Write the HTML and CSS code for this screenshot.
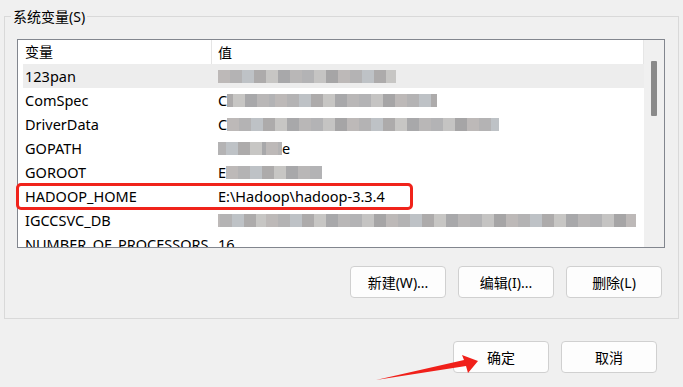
FILE: index.html
```html
<!DOCTYPE html>
<html>
  <head>
    <meta charset="UTF-8" />
    <title>环境变量</title>
    <link rel="stylesheet" href="styles.css">
  </head>
  <body>
    <div class="group">
      <span class="legend">系统变量(S)</span>
      <div class="list">
        <div class="view">
          <div class="head">
            <div class="col-name">变量</div>
            <div class="col-value">值</div>
          </div>
          <div class="row selected">
            <div class="name">123pan</div>
            <div class="value"><span class="blur" style="width:178px"></span></div>
          </div>
          <div class="row">
            <div class="name">ComSpec</div>
            <div class="value">C<span class="blur alt" style="width:210px"></span></div>
          </div>
          <div class="row">
            <div class="name">DriverData</div>
            <div class="value">C<span class="blur" style="width:272px"></span></div>
          </div>
          <div class="row">
            <div class="name">GOPATH</div>
            <div class="value"><span class="blur alt" style="width:64px"></span>e</div>
          </div>
          <div class="row">
            <div class="name">GOROOT</div>
            <div class="value">E<span class="blur" style="width:96px"></span></div>
          </div>
          <div class="row">
            <div class="name">HADOOP_HOME</div>
            <div class="value">E:\Hadoop\hadoop-3.3.4</div>
          </div>
          <div class="row">
            <div class="name">IGCCSVC_DB</div>
            <div class="value"><span class="blur alt" style="width:418px"></span></div>
          </div>
          <div class="row">
            <div class="name">NUMBER_OF_PROCESSORS</div>
            <div class="value">16</div>
          </div>
        </div>
        <div class="scrollbar"><div class="thumb"></div></div>
        <div class="mark"></div>
      </div>
      <div class="actions">
        <button class="btn">新建(W)...</button>
        <button class="btn">编辑(I)...</button>
        <button class="btn">删除(L)</button>
      </div>
    </div>

    <div class="footer">
      <button class="btn">确定</button>
      <button class="btn">取消</button>
    </div>

    <svg class="arrow" width="683" height="387" viewBox="0 0 683 387">
      <polygon points="376,380 464,360 462,355 478,361 468,373 466,366" fill="#f0201a" />
    </svg>
  </body>
</html>
```

FILE: styles.css
```css
body {
  margin: 0;
  width: 683px;
  height: 387px;
  overflow: hidden;
  position: relative;
  background-color: #f0f0f0;
  font-family: "Noto Sans", "Noto Sans CJK SC", sans-serif;
  font-size: 14px;
  color: #000;
}

.group {
  position: relative;
  box-sizing: border-box;
  width: 675px;
  height: 303px;
  margin: 16px 0 0 4px;
  padding: 22px 0 0 12px;
  border: 1px solid #d9d9d9;
}

.legend {
  position: absolute;
  top: -10px;
  left: 6px;
  padding: 0 2px;
  line-height: 20px;
  background-color: #f0f0f0;
}

.list {
  position: relative;
  display: flex;
  box-sizing: border-box;
  width: 648px;
  height: 209px;
  border: 1px solid #82868e;
  background-color: #fff;
  font-size: 14.5px;
}

.view {
  flex: 1;
  overflow: hidden;
  white-space: nowrap;
}

.head {
  display: flex;
  height: 24px;
  align-items: center;
  border-right: 1px solid #e6e6e6;
  font-size: 14px;
}

.head .col-name {
  box-sizing: border-box;
  width: 194px;
  padding-left: 7px;
  line-height: 24px;
  border-right: 1px solid #e5e5e5;
}

.head .col-value {
  padding-left: 6px;
}

.row {
  display: flex;
  height: 24px;
  align-items: center;
  margin-left: 5px;
}

.row.selected {
  background-color: #ededed;
}

.row .name {
  box-sizing: border-box;
  width: 193px;
  padding-left: 2px;
  overflow: hidden;
}

.row .value {
  display: flex;
  align-items: center;
  padding-left: 2px;
}

.blur {
  display: inline-block;
  height: 13px;
  background: repeating-linear-gradient(90deg,
    #bdb9b8 0 12px, #b4b3b4 12px 24px, #bec2c6 24px 36px, #adabab 36px 48px,
    #c7c6c4 48px 60px, #a8a8aa 60px 72px, #b9b7b7 72px 84px, #b3b3b5 84px 96px,
    #c5c4c3 96px 108px, #a6a5a6 108px 120px);
}

.blur.alt {
  background-position: 48px 0;
}

.scrollbar {
  width: 20px;
  background-color: #f0f0f0;
}

.thumb {
  width: 6px;
  height: 55px;
  margin: 21px 0 0 7px;
  border-radius: 1px;
  background-color: #8a8a8a;
}

/* red annotation round the HADOOP_HOME row */
.mark {
  position: absolute;
  left: -2px;
  top: 143px;
  box-sizing: border-box;
  width: 397px;
  height: 27px;
  border: 3px solid #f0231b;
  border-radius: 5px;
}

.actions,
.footer {
  display: flex;
  justify-content: flex-end;
  gap: 12px;
}

.actions {
  margin-top: 18px;
  padding-right: 16px;
}

.footer {
  margin-top: 22px;
  padding-right: 26px;
}

.btn {
  box-sizing: border-box;
  width: 96px;
  height: 32px;
  padding: 0;
  border: 1px solid #d0d0d0;
  border-radius: 4px;
  background-color: #fdfdfd;
  font-family: inherit;
  font-size: 14px;
  color: #000;
}

.arrow {
  position: absolute;
  left: 0;
  top: 0;
  pointer-events: none;
}
```
